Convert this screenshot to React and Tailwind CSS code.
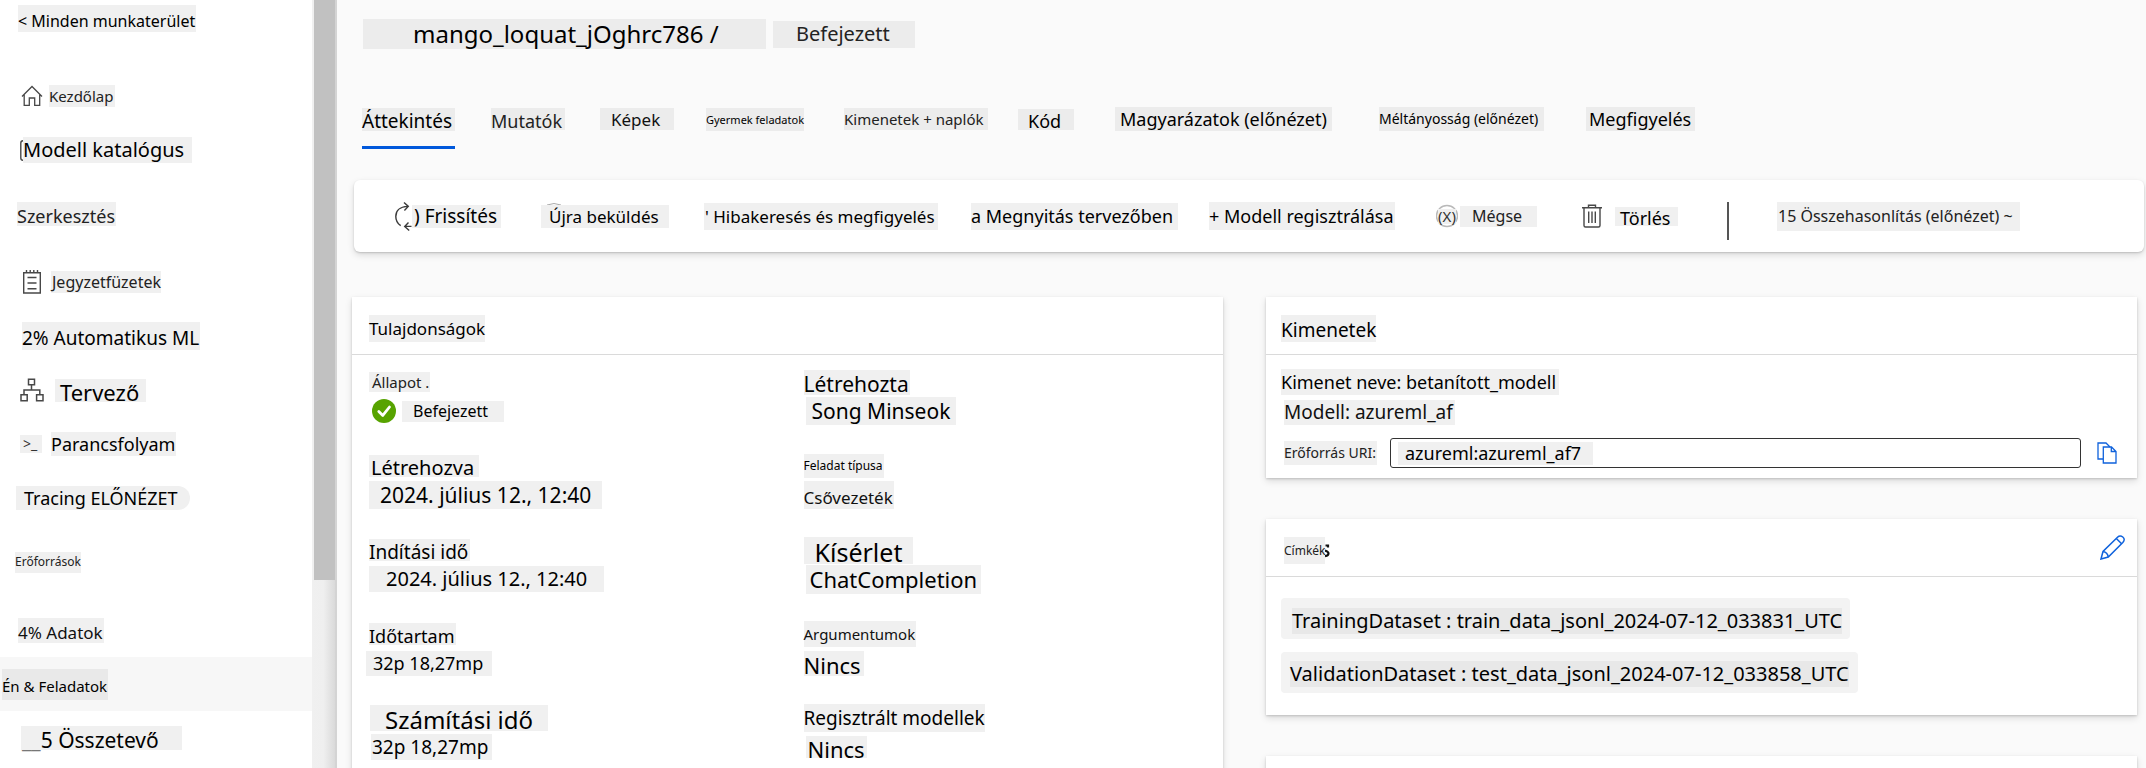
import React from "react";

function Patch({ className = "", tone = "bg-[#f0f0f0]", low = false, children }) {
  return (
    <span
      className={`inline-flex shrink-0 items-center whitespace-nowrap leading-none ${tone} ${low ? "pt-1" : ""} ${className}`}
    >
      {children}
    </span>
  );
}

const HomeIcon = () => (
  <svg width="22" height="22" viewBox="0 0 22 22" fill="none" stroke="#484848" strokeWidth="1.3">
    <path d="M1 11.5 11 1.5l10 10M3.2 9.5V20.3H8.3V13H13.7v7.3h5V9.5" />
  </svg>
);

const NotebookIcon = () => (
  <svg width="20" height="24" viewBox="0 0 20 24" fill="none" stroke="#484848" strokeWidth="1.4">
    <path d="M1.7 2.7H18.3V23H1.7zM4.5 0v3M8.2 0v3M11.8 0v3M15.5 0v3M5.5 7.5h9M5.5 13h9M5.5 18.7h9" />
  </svg>
);

const DesignerIcon = () => (
  <svg width="24" height="24" viewBox="0 0 24 24" fill="none" stroke="#484848" strokeWidth="1.5">
    <path d="M8.5 1.2h6v5.6h-6zM1 16.8h6.2v6H1zM16.6 16.8H23v6h-6.4zM11.5 6.8V12M4 16.8V12h15.8v4.8" />
  </svg>
);

const BarIcon = () => (
  <svg width="3" height="21" viewBox="0 0 3 21" fill="none" stroke="#484848" strokeWidth="1.4">
    <path d="M3 .7Q.8 .7 .8 3v15Q.8 20.3 3 20.3" />
  </svg>
);

const RefreshIcon = () => (
  <svg width="17" height="30" viewBox="0 0 17 30" fill="none" stroke="#3b3b3b" strokeWidth="1.4">
    <path d="M12.6 5.4C4.5 5.6.8 10 .8 15.500c0 4 1.6 7 4.900 9.200M9 1.500l4.300 3.900L9.400 9.500M16.500 25.400H10M13.500 21.500 9.700 25.400l4.500 4" />
  </svg>
);

const CancelIcon = () => (
  <span className="relative flex h-6 w-[22px] items-center justify-center">
    <svg className="absolute inset-0" width="22" height="24" viewBox="0 0 22 24" fill="none">
      <circle cx="11" cy="12" r="10.500" stroke="#b9b9b9" strokeWidth="1.400" />
    </svg>
    <span className="relative bg-[#f0f0f0] text-[15px] leading-none text-[#333]">(X)</span>
  </span>
);

const TrashIcon = () => (
  <svg width="20" height="24" viewBox="0 0 20 24" fill="none" stroke="#484848" strokeWidth="1.400">
    <path d="M0 3.700h20M6.500 3.700V1.200h7v2.500M2 3.700V21.500q0 1.500 1.500 1.500h13q1.500 0 1.500-1.500V3.700" />
    <path d="M6.700 7.500v11.500M10 7.500v11.500M13.300 7.500v11.500" />
  </svg>
);

const CheckIcon = () => (
  <svg width="24" height="24" viewBox="0 0 24 24" fill="none">
    <circle cx="12" cy="12" r="12" fill="#57a300" />
    <path d="M6.800 12.400l4 4L17.500 8" stroke="#fff" strokeWidth="2.800" strokeLinecap="round" strokeLinejoin="round" />
  </svg>
);

const CopyIcon = () => (
  <svg width="20" height="22" viewBox="0 0 20 22" fill="none" stroke="#0f62dc" strokeWidth="1.300">
    <path d="M6 17H1V1h8l4 4" />
    <path d="M6.300 5h8.200L19 9.500V21H6.300zM14.300 5v4.500H19" />
  </svg>
);

const PencilIcon = () => (
  <svg width="25" height="25" viewBox="0 0 25 25" fill="none" stroke="#0f62dc" strokeWidth="1.500">
    <path d="M1 24 3 16.500 17.500 2.200Q20-.2 22.800 2T22.800 7.500L8.300 22zM3 16.500q4.500.8 5.300 5.500M16.300 3.500l5.300 5.300" />
  </svg>
);

function NavItem({ icon, className = "", children }) {
  return (
    <li>
      <a href="#" className={`flex h-[54px] items-center ${className}`}>
        {icon}
        {children}
      </a>
    </li>
  );
}

function Sidebar() {
  return (
    <aside className="flex w-[335px] shrink-0 bg-white">
      <nav className="w-[312px] overflow-hidden" aria-label="Navigáció">
        <a href="#" className="flex h-[69px] items-start pl-[18px] pt-[5px]">
          <Patch low className="h-[27px] pr-px text-[16px]">&lt; Minden munkaterület</Patch>
        </a>
        <ul>
          <NavItem className="gap-[6px] pl-[21px]" icon={<HomeIcon />}>
            <Patch className="h-[22px] pr-[2px] text-[15px] text-[#222]">Kezdőlap</Patch>
          </NavItem>
          <NavItem className="pl-5" icon={<BarIcon />}>
            <Patch className="h-[26px] pr-2 text-[20px]">Modell katalógus</Patch>
          </NavItem>
        </ul>
        <h2 className="flex h-[78px] items-center pb-1 pl-[17px]">
          <Patch low className="h-6 pr-px text-[18px] text-[#222]">Szerkesztés</Patch>
        </h2>
        <ul>
          <NavItem className="gap-[9px] pl-[22px]" icon={<NotebookIcon />}>
            <Patch className="h-[22px] pl-px text-[16px] text-[#222]">Jegyzetfüzetek</Patch>
          </NavItem>
          <NavItem className="pl-[22px]">
            <Patch low className="h-7 pr-px text-[19px]">2% Automatikus ML</Patch>
          </NavItem>
          <NavItem className="gap-[11px] pl-5" icon={<DesignerIcon />}>
            <Patch low className="h-[23px] pl-[5px] pr-[7px] text-[22px]">Tervező</Patch>
          </NavItem>
          <NavItem
            className="gap-[9px] pl-5"
            icon={<Patch className="h-[18px] w-[22px] pl-[3px] text-[14px] text-[#333]">&gt;_</Patch>}
          >
            <Patch className="h-6 pr-px text-[18px]">Parancsfolyam</Patch>
          </NavItem>
          <NavItem className="pl-4">
            <Patch className="h-6 rounded-r-xl pl-2 pr-3 text-[18px]">Tracing ELŐNÉZET</Patch>
          </NavItem>
        </ul>
        <h2 className="flex h-[78px] items-center pb-1 pl-[15px]">
          <Patch className="h-[21px] text-[12px] text-[#222]">Erőforrások</Patch>
        </h2>
        <ul>
          <NavItem className="pl-[18px]">
            <Patch low className="h-[25px] pr-px text-[17px] text-[#111]">4% Adatok</Patch>
          </NavItem>
          <NavItem className="bg-[#f7f7f7] pl-[2px]">
            <Patch low tone="bg-[#e9e9e9]" className="h-[31px] pr-px text-[15px]">Én &amp; Feladatok</Patch>
          </NavItem>
          <NavItem className="pl-[21px]">
            <Patch low className="h-6 pl-px pr-[23px] text-[21px]">
              <span className="text-[#777]">__</span>5 Összetevő
            </Patch>
          </NavItem>
        </ul>
      </nav>
      <div className="flex w-[23px] flex-col bg-linear-to-r from-[#f0f0f0] via-[#efefef] to-[#dadada] pl-[2px]" aria-hidden="true">
        <div className="h-[75.5%] bg-[#c1c1c1]" />
      </div>
    </aside>
  );
}

const tabs = [
  { label: "Áttekintés", cls: "w-[93px] text-[19px] h-[23px]", low: true, active: true },
  { label: "Mutatók", gap: "ml-9", cls: "w-[74px] text-[18px] h-[22px] text-[#222]", low: true },
  { label: "Képek", gap: "ml-[35px]", cls: "w-[74px] text-[17px] h-[22px] pl-[11px] text-[#111]" },
  { label: "Gyermek feladatok", gap: "ml-8", cls: "w-[98px] text-[11px] h-[23px]" },
  { label: "Kimenetek + naplók", gap: "ml-10", cls: "w-[144px] text-[15px] h-[22px] text-[#222]" },
  { label: "Kód", gap: "ml-[30px]", cls: "w-[56px] text-[18px] h-[21px] pl-[10px]", low: true },
  { label: "Magyarázatok (előnézet)", gap: "ml-[41px]", cls: "w-[217px] text-[18px] h-6 pl-[5px]" },
  { label: "Méltányosság (előnézet)", gap: "ml-[47px]", cls: "w-[165px] text-[14px] h-6" },
  { label: "Megfigyelés", gap: "ml-[42px]", cls: "w-[109px] text-[18px] h-6 pl-[3px]" },
];

function Tabs() {
  return (
    <nav className="mt-[46px] flex pl-[25px]" role="tablist">
      {tabs.map((t) => (
        <button
          key={t.label}
          type="button"
          role="tab"
          aria-selected={!!t.active}
          className={`flex h-[54px] items-start border-b-[3px] pt-3 ${t.gap || ""} ${t.active ? "border-[#0058db]" : "border-transparent"}`}
        >
          <span className="flex h-6 items-center">
            <Patch tone="bg-[#ececec]" low={t.low} className={t.cls}>{t.label}</Patch>
          </span>
        </button>
      ))}
    </nav>
  );
}

const cardShadow = "shadow-[0_3px_7px_rgba(0,0,0,0.13),0_1px_2px_rgba(0,0,0,0.16)]";

function Toolbar() {
  return (
    <div className={`ml-[17px] mr-[2px] mt-[31px] flex h-[72px] items-center rounded-md bg-white pl-[41px] ${cardShadow}`} role="toolbar">
      <button type="button" className="flex items-center">
        <RefreshIcon />
        <Patch className="h-[23px] w-[89px] pl-[2px] text-[19px]">) Frissítés</Patch>
      </button>
      <button type="button" className="relative ml-10 flex items-center">
        <svg className="absolute -top-[2px] left-[6px]" width="14" height="2" viewBox="0 0 14 2" fill="none" stroke="#aaa">
          <path d="M0 2q7-3 14 0" />
        </svg>
        <Patch className="h-[23px] w-[128px] pl-2 text-[17px]">Újra beküldés</Patch>
      </button>
      <button type="button" className="ml-[35px] flex items-center">
        <Patch className="h-[27px] w-[234px] pl-px text-[17px]">&apos; Hibakeresés és megfigyelés</Patch>
      </button>
      <button type="button" className="ml-[33px] flex items-center">
        <Patch className="h-[27px] w-[207px] text-[18px]">a Megnyitás tervezőben</Patch>
      </button>
      <button type="button" className="ml-[31px] flex items-center">
        <Patch className="h-7 w-[186px] text-[18px]">+ Modell regisztrálása</Patch>
      </button>
      <button type="button" className="ml-[41px] flex items-center gap-[2px]">
        <CancelIcon />
        <Patch className="h-[21px] w-[77px] pl-3 text-[16px] text-[#222]">Mégse</Patch>
      </button>
      <button type="button" className="ml-[45px] flex items-center gap-[13px]">
        <TrashIcon />
        <Patch low className="h-[19px] w-[63px] pl-[5px] text-[18px]">Törlés</Patch>
      </button>
      <div className="ml-[49px] mt-[10px] h-[38px] w-[2px] bg-[#555]" />
      <button type="button" className="ml-12 flex items-center">
        <Patch className="h-[29px] w-[243px] pl-px text-[16px] text-[#222]">15 Összehasonlítás (előnézet) ~</Patch>
      </button>
    </div>
  );
}

function Card({ title, action, children }) {
  return (
    <section className={`bg-white ${cardShadow}`}>
      <div className="flex h-[58px] items-center justify-between border-b border-[#dadada] pl-[15px] pr-3 pt-[6px]">
        <h2 className="flex">{title}</h2>
        {action}
      </div>
      {children}
    </section>
  );
}

function Property({ term, children }) {
  return (
    <div className="h-[84px]">
      <dt className="flex h-6 items-center">{term}</dt>
      <dd className="mt-[3px] flex h-7 items-center">{children}</dd>
    </div>
  );
}

function Properties() {
  return (
    <Card title={<Patch className="ml-[2px] h-[27px] text-[17px]">Tulajdonságok</Patch>}>
      <div className="grid grid-cols-2 pt-[15px]">
        <dl className="pl-[17px]">
          <Property term={<Patch className="h-5 pl-[3px] pr-px text-[15px] text-[#222]">Állapot .</Patch>}>
            <span className="ml-[3px] flex items-center gap-[6px]">
              <CheckIcon />
              <Patch className="h-[21px] pl-[11px] pr-4 text-[16px]">Befejezett</Patch>
            </span>
          </Property>
          <Property term={<Patch low className="h-[22px] pl-[2px] pr-[5px] text-[20px]">Létrehozva</Patch>}>
            <Patch className="h-7 px-[11px] text-[21px]">2024. július 12., 12:40</Patch>
          </Property>
          <Property term={<Patch low className="h-[22px] pr-[2px] text-[19px]">Indítási idő</Patch>}>
            <Patch className="h-[26px] px-[17px] text-[20px]">2024. július 12., 12:40</Patch>
          </Property>
          <Property term={<Patch low className="h-[22px] pr-px text-[18px]">Időtartam</Patch>}>
            <Patch className="-ml-[3px] h-[25px] pl-[7px] pr-[9px] text-[18px]">32p 18,27mp</Patch>
          </Property>
          <Property term={<Patch low className="ml-px h-[26px] px-[15px] text-[24px]">Számítási idő</Patch>}>
            <Patch className="ml-[2px] h-[26px] pl-px pr-1 text-[19px]">32p 18,27mp</Patch>
          </Property>
        </dl>
        <dl className="pl-4">
          <Property term={<Patch low className="h-[25px] pr-px text-[21px]">Létrehozta</Patch>}>
            <Patch className="ml-[2px] h-7 px-[6px] text-[21px]">Song Minseok</Patch>
          </Property>
          <Property term={<Patch className="h-6 pr-px text-[12px]">Feladat típusa</Patch>}>
            <Patch low className="h-7 pr-px text-[17px] text-[#111]">Csővezeték</Patch>
          </Property>
          <Property term={<Patch low className="h-[27px] px-[11px] text-[25px]">Kísérlet</Patch>}>
            <Patch className="ml-[2px] h-[29px] px-1 text-[22px]">ChatCompletion</Patch>
          </Property>
          <Property term={<Patch className="h-[26px] pr-px text-[15px] text-[#111]">Argumentumok</Patch>}>
            <Patch low className="h-[25px] pr-[3px] text-[22px]">Nincs</Patch>
          </Property>
          <Property term={<Patch className="h-7 text-[19px]">Regisztrált modellek</Patch>}>
            <Patch low className="ml-[2px] h-[22px] px-[2px] text-[22px]">Nincs</Patch>
          </Property>
        </dl>
      </div>
    </Card>
  );
}

function Outputs() {
  return (
    <Card title={<Patch low className="h-[27px] text-[19px]">Kimenetek</Patch>}>
      <div className="pb-[10px] pl-[15px] pr-5 pt-3">
        <div className="flex h-[30px] items-center">
          <Patch className="h-[26px] pr-[3px] text-[18px]">Kimenet neve: betanított_modell</Patch>
        </div>
        <div className="flex h-[30px] items-center pl-[3px]">
          <Patch className="h-[25px] pr-[2px] text-[19px] text-[#111]">Modell: azureml_af</Patch>
        </div>
        <div className="mt-[11px] flex h-[30px] items-center pl-[3px]">
          <label htmlFor="uri" className="flex w-[106px] shrink-0">
            <Patch className="h-6 pr-px text-[14px] text-[#222]">Erőforrás URI:</Patch>
          </label>
          <div className="flex h-[30px] flex-1 items-center rounded-[3px] border border-[#333] pl-[7px]">
            <input
              id="uri"
              readOnly
              defaultValue="azureml:azureml_af7"
              className="h-[23px] w-[195px] bg-[#f0f0f0] pl-[7px] text-[18px] leading-none outline-none"
            />
          </div>
          <button type="button" aria-label="Másolás" className="ml-4">
            <CopyIcon />
          </button>
        </div>
      </div>
    </Card>
  );
}

function Tags() {
  return (
    <Card
      title={
        <>
          <Patch className="ml-[3px] h-[27px] text-[12px] text-[#222]">Címkék</Patch>
          <svg className="mt-[7px]" width="5" height="14" viewBox="0 0 5 14" fill="none" stroke="#111" strokeWidth="2.200">
            <path d="M.5 1.500h2.500v2M0 6.500q3.500 1 3.500 3T0 12.200" />
          </svg>
        </>
      }
      action={
        <button type="button" aria-label="Szerkesztés" className="pb-[7px]">
          <PencilIcon />
        </button>
      }
    >
      <ul className="flex flex-col items-start gap-[13px] pb-[22px] pl-[15px] pt-[21px]">
        <li className="flex h-[41px] items-center rounded bg-[#f3f3f3] pl-[11px] pr-2 pt-1">
          <Patch tone="bg-[#e8e8e8]" className="h-[26px] text-[20px]">
            TrainingDataset : train_data_jsonl_2024-07-12_033831_UTC
          </Patch>
        </li>
        <li className="flex h-[41px] items-center rounded bg-[#f3f3f3] px-[9px] pt-[2px]">
          <Patch tone="bg-[#e8e8e8]" className="h-[26px] text-[20px]">
            ValidationDataset : test_data_jsonl_2024-07-12_033858_UTC
          </Patch>
        </li>
      </ul>
    </Card>
  );
}

export default function App() {
  return (
    <div className="flex h-screen overflow-hidden bg-white font-['Noto_Sans',sans-serif] text-black">
      <Sidebar />
      <main className="min-w-0 flex-1 overflow-hidden border-l-2 border-[#d4d4d4] bg-[#fafafa]">
        <header className="flex items-center gap-[7px] pl-[26px] pt-[19px]">
          <h1 className="flex">
            <Patch tone="bg-[#ececec]" className="h-[30px] w-[403px] pl-[50px] text-[24px]">mango_loquat_jOghrc786 /</Patch>
          </h1>
          <Patch tone="bg-[#ececec]" className="h-[27px] w-[142px] pl-[23px] text-[20px] text-[#222]">Befejezett</Patch>
        </header>
        <Tabs />
        <Toolbar />
        <div className="ml-[15px] mr-[9px] mt-[45px] grid grid-cols-2 gap-[43px]">
          <Properties />
          <div className="flex flex-col gap-[41px]">
            <Outputs />
            <Tags />
            <section className={`h-[200px] bg-white ${cardShadow}`} />
          </div>
        </div>
      </main>
    </div>
  );
}
